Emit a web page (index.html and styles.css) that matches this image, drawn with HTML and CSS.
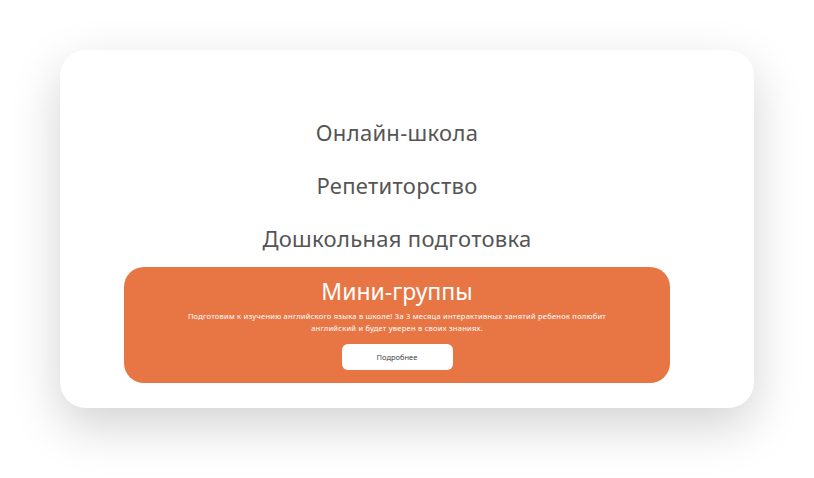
FILE: index.html
```html
<!DOCTYPE html>
<html lang="ru">
<head>
<meta charset="utf-8">
<link rel="stylesheet" href="styles.css">
</head>
<body>
<div class="stage">
  <div class="card">
    <ul class="menu">
      <li class="item">Онлайн-школа</li>
      <li class="item">Репетиторство</li>
      <li class="item">Дошкольная подготовка</li>
    </ul>
    <div class="promo">
      <div class="promo-title">Мини-группы</div>
      <p class="promo-text">Подготовим к изучению английского языка в школе! За 3 месяца интерактивных занятий ребенок полюбит английский и будет уверен в своих знаниях.</p>
      <button class="promo-btn">Подробнее</button>
    </div>
  </div>
</div>
</body>
</html>
```

FILE: styles.css
```css
html, body {
  margin: 0;
  padding: 0;
  background: #ffffff;
}
body {
  font-family: "Noto Sans", "Open Sans", sans-serif;
  width: 814px;
  height: 478px;
  overflow: hidden;
}
.stage {
  padding: 50px 60px 0 60px;
}
.card {
  width: 694px;
  height: 358px;
  box-sizing: border-box;
  background: #fff;
  border-radius: 26px;
  box-shadow: 0 18px 50px rgba(0, 0, 0, 0.18);
  padding: 66px 84px 0 64px;
  display: flex;
  flex-direction: column;
  align-items: stretch;
}
.menu {
  list-style: none;
  margin: 0;
  padding: 0;
  display: flex;
  flex-direction: column;
  align-items: center;
  gap: 21px;
}
.item {
  font-size: 22px;
  line-height: 32px;
  color: #555555;
  letter-spacing: 0.3px;
}
.promo {
  margin-top: 13px;
  width: 546px;
  height: 116px;
  box-sizing: border-box;
  background: #e87645;
  border-radius: 20px;
  display: flex;
  flex-direction: column;
  align-items: center;
  padding-top: 10px;
  color: #fff;
}
.promo-title {
  font-size: 23px;
  line-height: 28px;
}
.promo-text {
  margin: 5px 0 0 0;
  width: 430px;
  text-align: center;
  font-size: 7.5px;
  line-height: 12px;
  letter-spacing: 0.25px;
}
.promo-btn {
  margin-top: 10px;
  width: 111px;
  height: 26px;
  border: none;
  border-radius: 6px;
  background: #fff;
  color: #444;
  font-family: inherit;
  font-size: 7.5px;
  padding: 0;
}
```
